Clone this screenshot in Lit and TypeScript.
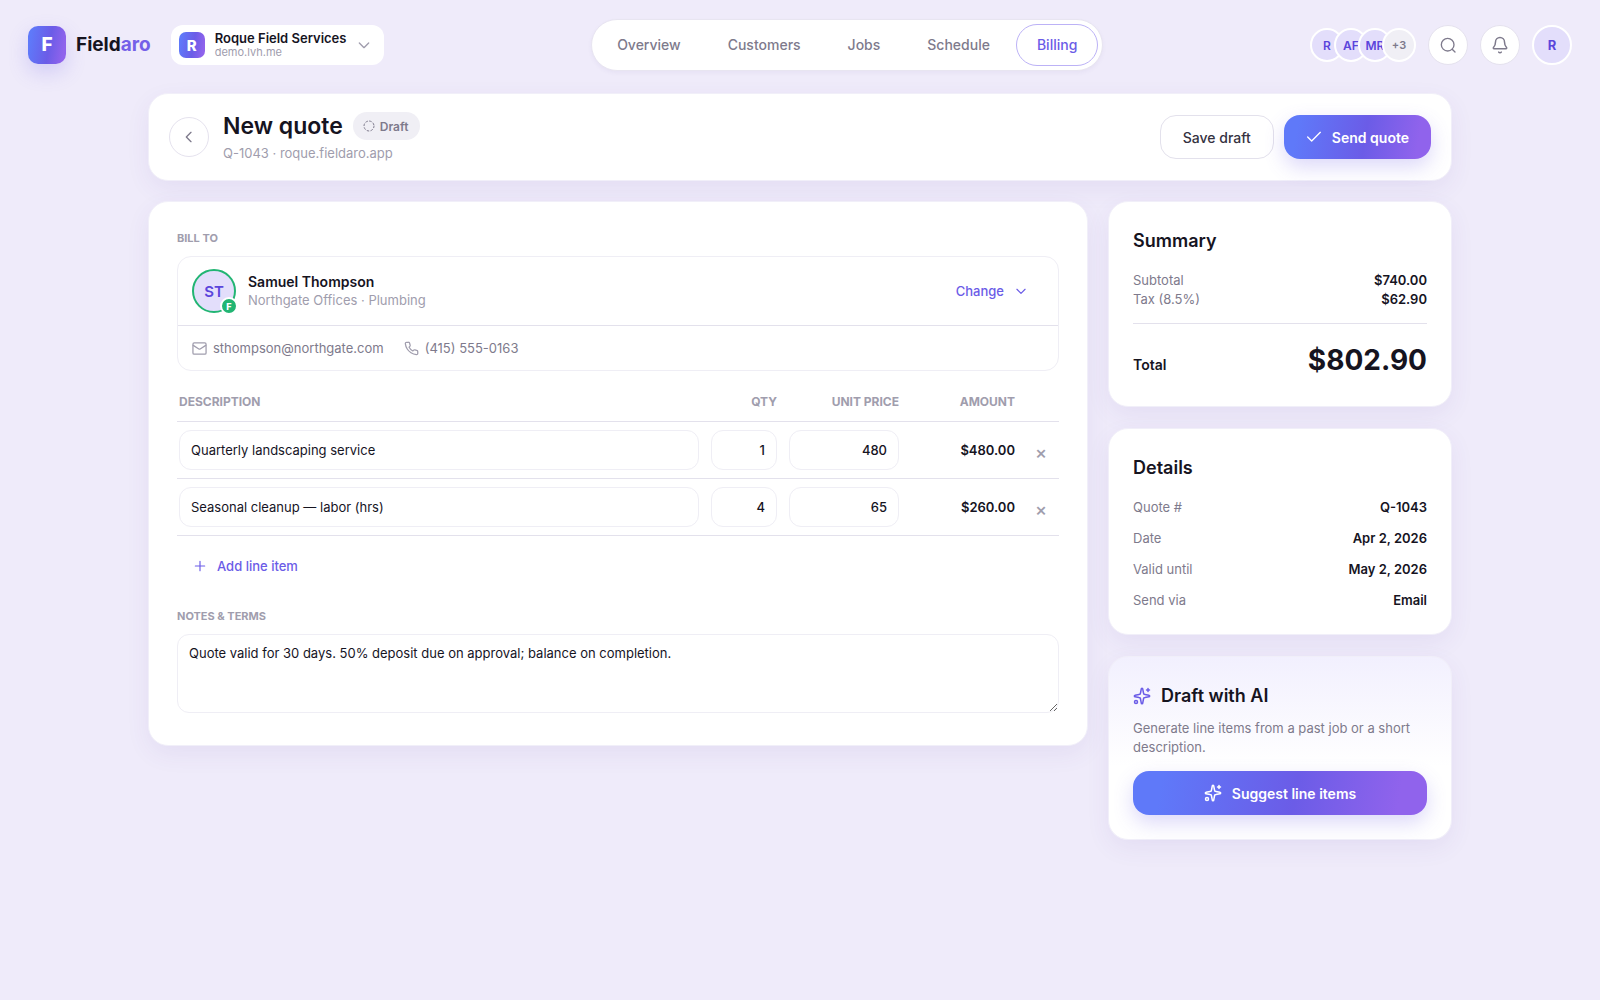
import { LitElement, html, css, svg } from 'lit';
import { customElement, state } from 'lit/decorators.js';
import { classMap } from 'lit/directives/class-map.js';

interface LineItem {
  description: string;
  qty: number;
  price: number;
}

const TAX_RATE = 0.085;

const paths = {
  chevronDown: svg`<path d="m5 9 7 7 7-7" />`,
  chevronLeft: svg`<path d="m15 19-7-7 7-7" />`,
  check: svg`<path d="M21.500 5 8.500 18l-6-6" />`,
  plus: svg`<path d="M4 12h16M12 4v16" />`,
  search: svg`<circle cx="11.5" cy="11.5" r="9.500" /><path d="m22.500 22.500-4.200-4.200" />`,
  bell: svg`<path d="M10.3 21.5a2 2 0 0 0 3.400 0" /><path d="M6 8a6 6 0 0 1 12 0c0 4.500 1.400 6 2.700 7.300A1 1 0 0 1 20 17H4a1 1 0 0 1-.7-1.700C4.600 14 6 12.500 6 8" />`,
  draft: svg`<circle cx="12" cy="12" r="10" stroke-dasharray="3.500 4.350" />`,
  mail: svg`<rect x="1.500" y="3" width="21" height="18" rx="2" /><path d="m22 7-8.970 5.700a1.940 1.940 0 0 1-2.060 0L2 7" />`,
  phone: svg`<path d="M22 16.920v3a2 2 0 0 1-2.180 2 19.790 19.790 0 0 1-8.630-3.070 19.500 19.500 0 0 1-6-6 19.790 19.790 0 0 1-3.070-8.670A2 2 0 0 1 4.110 2h3a2 2 0 0 1 2 1.720c.127.960.361 1.903.7 2.810a2 2 0 0 1-.45 2.110L8.090 9.910a16 16 0 0 0 6 6l1.270-1.270a2 2 0 0 1 2.110-.45c.907.339 1.850.573 2.810.7A2 2 0 0 1 22 16.920z" />`,
  sparkles: svg`<path d="M11 2.800a1 1 0 0 1 2 0l1 5.200a2 2 0 0 0 2 2l5.200 1a1 1 0 0 1 0 2l-5.200 1a2 2 0 0 0-2 2l-1 5.200a1 1 0 0 1-2 0l-1-5.200a2 2 0 0 0-2-2l-5.200-1a1 1 0 0 1 0-2L8 10a2 2 0 0 0 2-2z" /><path d="M20 2v4M22 4h-4" /><circle cx="4" cy="20" r="2" />`,
};

function icon(name: keyof typeof paths, size = 16, stroke = 2) {
  return html`
    <svg
      width=${size}
      height=${size}
      viewBox="0 0 24 24"
      fill="none"
      stroke="currentColor"
      stroke-width=${stroke}
      stroke-linecap="round"
      stroke-linejoin="round"
      aria-hidden="true"
    >${paths[name]}</svg>
  `;
}

function money(value: number) {
  return '$' + value.toFixed(2);
}

@customElement('app-root')
export class AppRoot extends LitElement {
  static styles = css`
    :host {
      --ink: #16141f;
      --mid: #7e7a8c;
      --muted: #a09dad;
      --line: #e3e1ec;
      --line-soft: #efeef5;
      --brand: #6b5ce7;
      --gradient: linear-gradient(100deg, #5f79f9 10%, #6b5ce7 55%, #9063ec 90%);
      display: block;
      min-height: 100vh;
      box-sizing: border-box;
      background: #efebfa;
      color: var(--ink);
      font-family: Inter, 'Open Sans', sans-serif;
      font-size: 13px;
      line-height: 19px;
    }

    * {
      box-sizing: border-box;
    }

    svg {
      display: block;
      flex: none;
    }

    h1, h2, p, dl, dd {
      margin: 0;
    }

    button, input, textarea {
      font: inherit;
      color: inherit;
      margin: 0;
    }

    button {
      display: inline-flex;
      align-items: center;
      justify-content: center;
      border: none;
      background: none;
      padding: 0;
      white-space: nowrap;
      cursor: pointer;
    }

    a {
      color: inherit;
      text-decoration: none;
    }

    /* Top bar */
    .topbar {
      display: flex;
      align-items: center;
      justify-content: space-between;
      padding: 19px 28px 22px;
    }

    .left, .right {
      display: flex;
      align-items: center;
    }

    .left {
      gap: 20px;
    }

    .right {
      gap: 12px;
    }

    .brand {
      display: flex;
      align-items: center;
      gap: 10px;
      font-size: 19px;
      line-height: 28px;
      font-weight: 700;
    }

    .mark, .tile {
      display: grid;
      place-items: center;
      background: var(--gradient);
      color: #fff;
      font-weight: 800;
    }

    .mark {
      width: 38px;
      height: 38px;
      border-radius: 10px;
      box-shadow: 0 8px 20px rgba(107, 92, 231, 0.22);
    }

    .tile {
      width: 26px;
      height: 26px;
      border-radius: 7px;
      font-size: 15px;
    }

    .brand-accent {
      color: #7460e8;
    }

    .workspace {
      gap: 10px;
      height: 40px;
      padding: 0 12px 0 8px;
      border-radius: 12px;
      background: #fff;
      text-align: left;
      color: var(--muted);
    }

    .workspace-text {
      display: flex;
      flex-direction: column;
      font-size: 11px;
      line-height: 13px;
    }

    .workspace-name {
      color: var(--ink);
      font-size: 13px;
      line-height: 15px;
      font-weight: 600;
    }

    .nav {
      display: flex;
      gap: 5px;
      padding: 4px;
      border: 1px solid #e8e5f1;
      border-radius: 26px;
      background: #fff;
      box-shadow: 0 2px 4px rgba(70, 50, 140, 0.05);
    }

    .nav-link {
      padding: 10px 20px;
      border: 1px solid transparent;
      border-radius: 21px;
      color: var(--mid);
      font-size: 14px;
      line-height: 20px;
      font-weight: 500;
    }

    .nav-link.active {
      border-color: #bcb2f6;
      color: var(--brand);
    }

    .people {
      display: flex;
    }

    .person {
      display: grid;
      place-items: center;
      flex: none;
      width: 34px;
      height: 34px;
      border: 2px solid #fff;
      border-radius: 50%;
      background: #e3defb;
      color: #5b45db;
      font-size: 12px;
      font-weight: 600;
      overflow: hidden;
    }

    .person + .person {
      margin-left: -10px;
    }

    .person.more {
      background: #f0eff5;
      color: var(--mid);
      font-size: 11px;
    }

    .round {
      width: 40px;
      height: 40px;
      border: 1px solid #e5e2ee;
      border-radius: 50%;
      background: #fff;
      color: var(--mid);
    }

    .round.me {
      border: 2px solid #fff;
      background: #e3defb;
      color: #5b45db;
      font-weight: 700;
    }

    /* Page */
    .page {
      display: flex;
      flex-direction: column;
      gap: 20px;
      max-width: 1304px;
      margin: 0 auto;
      padding-bottom: 40px;
    }

    .card {
      border: 1px solid #f1eff9;
      border-radius: 20px;
      background: #fff;
      box-shadow: 0 8px 24px rgba(80, 60, 150, 0.07);
    }

    .page-head {
      display: flex;
      align-items: center;
      gap: 14px;
      padding: 17px 20px;
    }

    .titles {
      flex: 1;
    }

    .title-row {
      display: flex;
      align-items: center;
      gap: 10px;
    }

    .title {
      font-size: 23px;
      line-height: 30px;
      font-weight: 600;
    }

    .pill {
      display: flex;
      align-items: center;
      gap: 5px;
      height: 28px;
      padding: 0 12px 0 10px;
      border-radius: 14px;
      background: #f0eff5;
      color: var(--mid);
      font-size: 12px;
      font-weight: 600;
    }

    .sub {
      color: var(--muted);
      margin-top: 3px;
    }

    .actions {
      display: flex;
      gap: 10px;
    }

    .button {
      height: 44px;
      padding: 0 22px;
      gap: 10px;
      border-radius: 16px;
      font-size: 14px;
      font-weight: 500;
    }

    .button.outline {
      border: 1px solid var(--line);
      color: #35323f;
    }

    .button.primary {
      background: var(--gradient);
      color: #fff;
      font-weight: 600;
      box-shadow: 0 8px 20px rgba(107, 92, 231, 0.24);
    }

    .columns {
      display: grid;
      grid-template-columns: minmax(0, 1fr) 344px;
      align-items: start;
      gap: 20px;
    }

    .editor {
      padding: 28px 28px 32px;
    }

    .label {
      display: block;
      margin-bottom: 10px;
      color: var(--muted);
      font-size: 11px;
      line-height: 16px;
      font-weight: 700;
    }

    .client {
      border: 1px solid var(--line-soft);
      border-radius: 14px;
    }

    .client-main {
      display: flex;
      align-items: center;
      gap: 12px;
      padding: 12px 14px;
      border-bottom: 1px solid var(--line);
    }

    .client-avatar {
      position: relative;
      display: grid;
      place-items: center;
      width: 44px;
      height: 44px;
      border: 2px solid #22b573;
      border-radius: 50%;
      background: #e3defb;
      color: #5b45db;
      font-size: 15px;
      font-weight: 600;
    }

    .client-badge {
      position: absolute;
      right: -4px;
      bottom: -4px;
      display: grid;
      place-items: center;
      width: 18px;
      height: 18px;
      border: 2px solid #fff;
      border-radius: 50%;
      background: #22b573;
      color: #fff;
      font-size: 9px;
      line-height: 9px;
      font-weight: 800;
    }

    .client-info {
      flex: 1;
      color: var(--muted);
    }

    .client-name {
      color: var(--ink);
      font-size: 14px;
      font-weight: 600;
    }

    .link-button {
      height: 36px;
      padding: 0 16px;
      gap: 10px;
      color: var(--brand);
      font-weight: 500;
    }

    .contacts {
      display: flex;
      gap: 20px;
      padding: 12px 14px;
      color: var(--mid);
      line-height: 20px;
    }

    .contact {
      display: flex;
      align-items: center;
      gap: 6px;
    }

    .contact svg {
      color: var(--muted);
    }

    .items {
      width: 100%;
      margin-top: 12px;
      border-collapse: separate;
      border-spacing: 0;
      table-layout: fixed;
    }

    .items th {
      padding: 10px 10px 10px 2px;
      border-bottom: 1px solid var(--line);
      color: var(--muted);
      font-size: 12px;
      line-height: 18px;
      font-weight: 700;
      text-align: left;
      white-space: nowrap;
    }

    .items td {
      padding: 8px 10px 8px 2px;
      border-bottom: 1px solid var(--line);
    }

    .items .num {
      text-align: right;
    }

    .col-qty {
      width: 78px;
    }

    .col-price {
      width: 122px;
    }

    .col-amount {
      width: 116px;
    }

    .col-remove {
      width: 34px;
    }

    .items .amount {
      font-weight: 600;
      text-align: right;
    }

    .items .cell-remove {
      padding: 8px 0;
    }

    .field {
      display: block;
      width: 100%;
      height: 40px;
      padding: 0 11px;
      border: 1px solid var(--line-soft);
      border-radius: 12px;
      background: #fff;
      outline: none;
    }

    .field.num {
      font-weight: 500;
    }

    .field:focus {
      border-color: #bcb2f6;
    }

    .remove {
      width: 32px;
      height: 28px;
      padding-top: 4px;
      color: var(--muted);
      font-size: 18px;
      font-weight: 500;
    }

    .add {
      margin: 12px 0 24px;
    }

    textarea.field {
      height: 79px;
      padding: 9px 11px;
      resize: vertical;
    }

    /* Side column */
    .side {
      display: flex;
      flex-direction: column;
      gap: 21px;
    }

    .panel {
      padding: 24px;
    }

    .panel-title {
      display: flex;
      align-items: center;
      gap: 10px;
      font-size: 18px;
      line-height: 30px;
      font-weight: 600;
    }

    .panel-title svg {
      color: var(--brand);
    }

    .rows {
      display: flex;
      flex-direction: column;
      margin-top: 15px;
      color: var(--mid);
    }

    .rows.loose {
      gap: 12px;
    }

    .row {
      display: flex;
      justify-content: space-between;
    }

    .row dd {
      color: var(--ink);
      font-weight: 600;
    }

    .total {
      display: flex;
      align-items: baseline;
      justify-content: space-between;
      margin-top: 14px;
      padding-top: 14px;
      border-top: 1px solid var(--line);
      font-size: 14px;
      font-weight: 600;
    }

    .total-value {
      font-size: 28px;
      line-height: 44px;
      font-weight: 700;
    }

    .ai {
      background: linear-gradient(180deg, #f2f0fe, #fff 60%);
    }

    .ai-text {
      margin: 8px 0 14px;
      color: var(--mid);
    }

    .ai .button {
      width: 100%;
    }
  `;

  @state()
  private items: LineItem[] = [
    { description: 'Quarterly landscaping service', qty: 1, price: 480 },
    { description: 'Seasonal cleanup — labor (hrs)', qty: 4, price: 65 },
  ];

  @state()
  private notes = 'Quote valid for 30 days. 50% deposit due on approval; balance on completion.';

  private tabs = ['Overview', 'Customers', 'Jobs', 'Schedule', 'Billing'];

  private details = [
    ['Quote #', 'Q-1043'],
    ['Date', 'Apr 2, 2026'],
    ['Valid until', 'May 2, 2026'],
    ['Send via', 'Email'],
  ];

  get subtotal() {
    return this.items.reduce((sum, item) => sum + item.qty * item.price, 0);
  }

  private updateItem(index: number, patch: Partial<LineItem>) {
    this.items = this.items.map((item, i) => (i === index ? { ...item, ...patch } : item));
  }

  private addItem() {
    this.items = [...this.items, { description: '', qty: 1, price: 0 }];
  }

  private removeItem(index: number) {
    this.items = this.items.filter((_, i) => i !== index);
  }

  private value(e: Event) {
    return (e.target as HTMLInputElement).value;
  }

  renderTopbar() {
    return html`
      <header class="topbar">
        <div class="left">
          <a class="brand" href="#">
            <span class="mark">F</span>
            <span>Field<span class="brand-accent">aro</span></span>
          </a>
          <button class="workspace">
            <span class="tile">R</span>
            <span class="workspace-text">
              <span class="workspace-name">Roque Field Services</span>
              <span>demo.lvh.me</span>
            </span>
            ${icon('chevronDown', 16)}
          </button>
        </div>
        <nav class="nav">
          ${this.tabs.map(
            (tab) => html`
              <a class=${classMap({ 'nav-link': true, active: tab === 'Billing' })} href="#">${tab}</a>
            `
          )}
        </nav>
        <div class="right">
          <div class="people">
            <span class="person">R</span>
            <span class="person">AF</span>
            <span class="person">MR</span>
            <span class="person more">+3</span>
          </div>
          <button class="round" aria-label="Search">${icon('search', 16)}</button>
          <button class="round" aria-label="Notifications">${icon('bell', 18)}</button>
          <button class="round me" aria-label="Account">R</button>
        </div>
      </header>
    `;
  }

  renderItem(item: LineItem, index: number) {
    return html`
      <tr>
        <td>
          <input
            class="field"
            type="text"
            aria-label="Description"
            .value=${item.description}
            @input=${(e: Event) => this.updateItem(index, { description: this.value(e) })}
          />
        </td>
        <td>
          <input
            class="field num"
            type="text"
            inputmode="numeric"
            aria-label="Quantity"
            .value=${String(item.qty)}
            @change=${(e: Event) => this.updateItem(index, { qty: Number(this.value(e)) || 0 })}
          />
        </td>
        <td>
          <input
            class="field num"
            type="text"
            inputmode="decimal"
            aria-label="Unit price"
            .value=${String(item.price)}
            @change=${(e: Event) => this.updateItem(index, { price: Number(this.value(e)) || 0 })}
          />
        </td>
        <td class="amount">${money(item.qty * item.price)}</td>
        <td class="cell-remove">
          <button class="remove" aria-label="Remove line" @click=${() => this.removeItem(index)}>×</button>
        </td>
      </tr>
    `;
  }

  renderEditor() {
    return html`
      <section class="card editor">
        <span class="label">BILL TO</span>
        <div class="client">
          <div class="client-main">
            <span class="client-avatar">ST<span class="client-badge">F</span></span>
            <div class="client-info">
              <div class="client-name">Samuel Thompson</div>
              <div>Northgate Offices · Plumbing</div>
            </div>
            <button class="link-button">Change ${icon('chevronDown', 14)}</button>
          </div>
          <div class="contacts">
            <a class="contact" href="mailto:sthompson@northgate.com">${icon('mail', 15)} sthompson@northgate.com</a>
            <a class="contact" href="tel:4155550163">${icon('phone', 15)} (415) 555-0163</a>
          </div>
        </div>

        <table class="items">
          <colgroup>
            <col />
            <col class="col-qty" />
            <col class="col-price" />
            <col class="col-amount" />
            <col class="col-remove" />
          </colgroup>
          <thead>
            <tr>
              <th>DESCRIPTION</th>
              <th class="num">QTY</th>
              <th class="num">UNIT PRICE</th>
              <th class="num">AMOUNT</th>
              <th></th>
            </tr>
          </thead>
          <tbody>
            ${this.items.map((item, i) => this.renderItem(item, i))}
          </tbody>
        </table>
        <button class="link-button add" @click=${this.addItem}>${icon('plus', 14)} Add line item</button>

        <label class="label" for="notes">NOTES &amp; TERMS</label>
        <textarea
          id="notes"
          class="field"
          .value=${this.notes}
          @input=${(e: Event) => (this.notes = this.value(e))}
        ></textarea>
      </section>
    `;
  }

  renderSide() {
    const tax = this.subtotal * TAX_RATE;
    return html`
      <aside class="side">
        <section class="card panel">
          <h2 class="panel-title">Summary</h2>
          <dl class="rows">
            <div class="row"><dt>Subtotal</dt><dd>${money(this.subtotal)}</dd></div>
            <div class="row"><dt>Tax (8.5%)</dt><dd>${money(tax)}</dd></div>
          </dl>
          <div class="total">
            <span>Total</span>
            <span class="total-value">${money(this.subtotal + tax)}</span>
          </div>
        </section>

        <section class="card panel">
          <h2 class="panel-title">Details</h2>
          <dl class="rows loose">
            ${this.details.map(
              ([name, value]) => html`<div class="row"><dt>${name}</dt><dd>${value}</dd></div>`
            )}
          </dl>
        </section>

        <section class="card panel ai">
          <h2 class="panel-title">${icon('sparkles', 18)} Draft with AI</h2>
          <p class="ai-text">Generate line items from a past job or a short description.</p>
          <button class="button primary">${icon('sparkles', 18)} Suggest line items</button>
        </section>
      </aside>
    `;
  }

  render() {
    return html`
      ${this.renderTopbar()}
      <main class="page">
        <header class="card page-head">
          <button class="round" aria-label="Back">${icon('chevronLeft', 16)}</button>
          <div class="titles">
            <div class="title-row">
              <h1 class="title">New quote</h1>
              <span class="pill">${icon('draft', 12)} Draft</span>
            </div>
            <p class="sub">Q-1043 · roque.fieldaro.app</p>
          </div>
          <div class="actions">
            <button class="button outline">Save draft</button>
            <button class="button primary">${icon('check', 16)} Send quote</button>
          </div>
        </header>
        <div class="columns">
          ${this.renderEditor()}
          ${this.renderSide()}
        </div>
      </main>
    `;
  }
}
